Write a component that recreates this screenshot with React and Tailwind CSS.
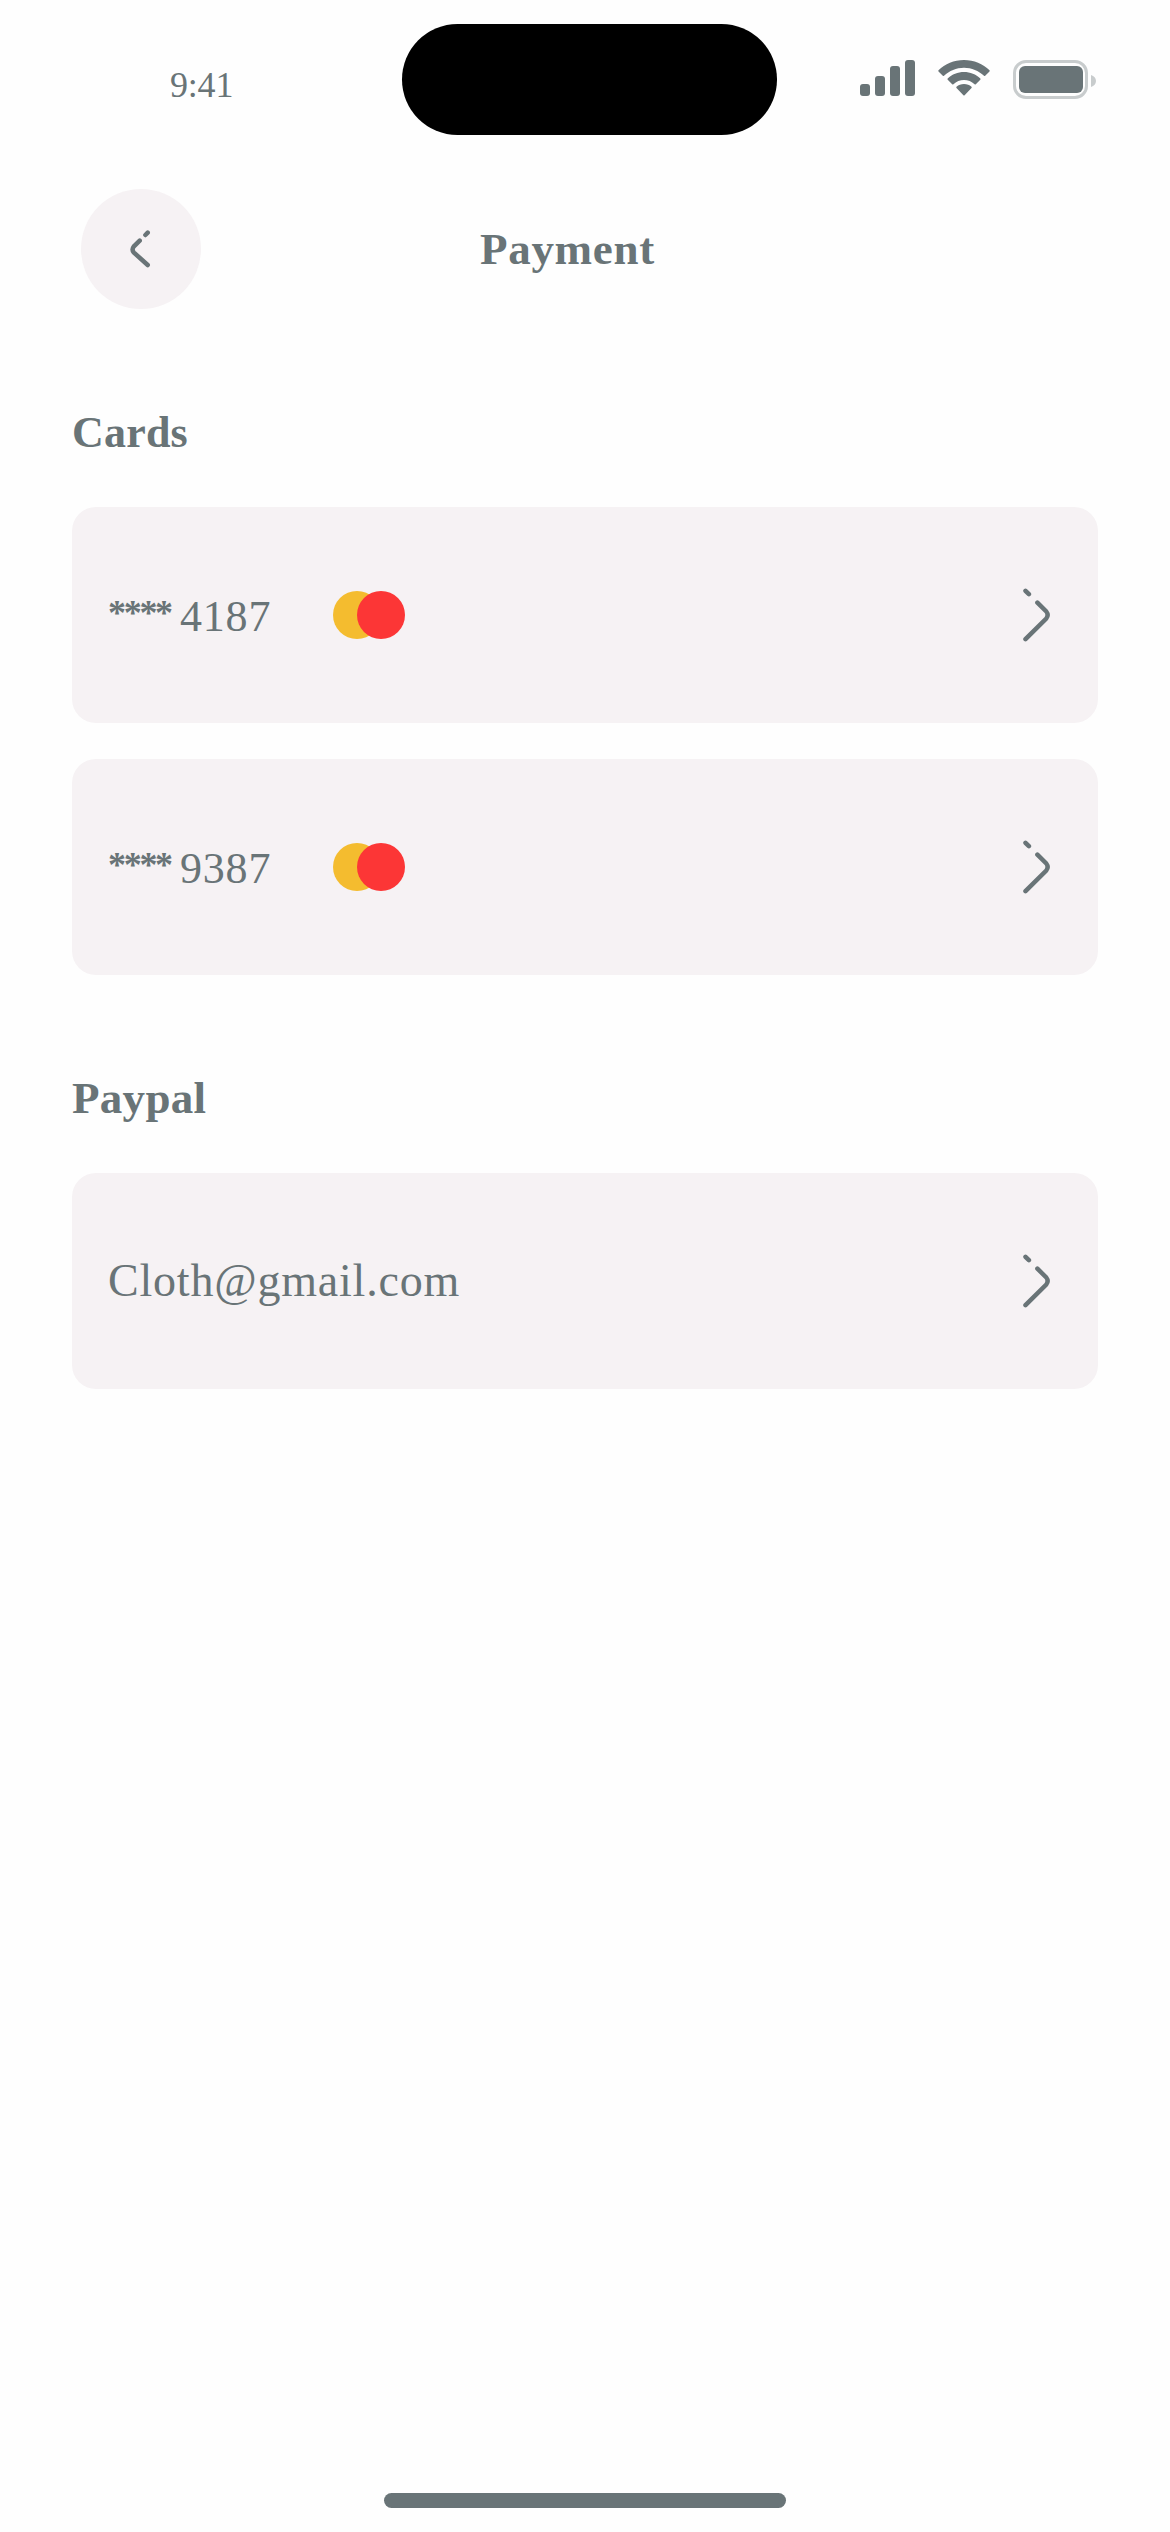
function StatusBar() {
  return (
    <header className="flex h-[159px] items-start">
      <div className="w-[402px] pl-[170px] pt-[65px] text-[36px] leading-[40px] tracking-[-0.2px]">9:41</div>
      <div className="mt-6 h-[111px] w-[375px] rounded-full bg-black" />
      <svg className="ml-[83px] mt-[60px] h-9 w-[55px]" viewBox="0 0 55 36" fill="currentColor">
        <rect x="0" y="24" width="10" height="12" rx="3" />
        <rect x="15" y="16" width="10" height="20" rx="3" />
        <rect x="30" y="6" width="10" height="30" rx="3" />
        <rect x="45" y="0" width="10" height="36" rx="3" />
      </svg>
      <svg className="ml-[23px] mt-[60px] h-9 w-[52px]" viewBox="0 0 52 36" fill="currentColor">
        <path d="M26 0C36 0 45 3.8 51.5 10.2Q52 10.8 51.5 11.4L47.2 15.8Q46.6 16.3 46 15.8C40.6 10.8 33.7 7.8 26 7.8S11.4 10.8 6 15.8Q5.4 16.3 4.8 15.8L.5 11.4Q0 10.8 .5 10.2C7 3.8 16 0 26 0Z" />
        <path d="M26 12C32.2 12 38 14.3 42.3 18.5Q42.9 19.1 42.3 19.7L37.8 24.2Q37.2 24.7 36.6 24.2C33.7 21.5 30 20 26 20S18.3 21.5 15.4 24.2Q14.8 24.7 14.2 24.2L9.7 19.7Q9.1 19.1 9.7 18.5C14 14.3 19.8 12 26 12Z" />
        <path d="M26 24C29 24 31.5 25 33.5 26.7Q34.1 27.3 33.5 27.9L26.6 35.3Q26 35.9 25.4 35.3L18.5 27.9Q17.9 27.3 18.5 26.7C20.5 25 23 24 26 24Z" />
      </svg>
      <svg className="ml-[23px] mt-[60px] h-[39px] w-[83px]" viewBox="0 0 83 39" fill="currentColor">
        <rect x="1.5" y="1.5" width="72" height="36" rx="11.5" fill="none" stroke="#c8cccd" strokeWidth="3" />
        <rect x="6" y="6" width="64" height="27" rx="6" />
        <path d="M78 15C81 16 83 18 83 21S81 26 78 27Z" fill="#c8cccd" />
      </svg>
    </header>
  );
}

function BackIcon() {
  return (
    <svg className="h-10 w-6" viewBox="0 0 24 40" fill="none" stroke="currentColor" strokeWidth="4.5" strokeLinecap="round">
      <path d="M18.7 3.7L16.4 6M10.7 11.7L4.7 17.6Q2.5 20.5 4.7 23.4L18.7 36" />
    </svg>
  );
}

function ChevronIcon() {
  return (
    <svg className="h-[54px] w-[28px]" viewBox="0 0 28 54" fill="none" stroke="currentColor" strokeWidth="4.5" strokeLinecap="round">
      <path d="M3.5 2.8L6.9 6.2M15.4 14.7L24.3 23.5Q27 27 24.3 30.5L3.5 51.2" />
    </svg>
  );
}

function Row({ children }) {
  return (
    <button className="flex h-[216px] w-full items-center justify-between rounded-3xl bg-[#f6f2f4] pl-9 pr-12 text-left">
      {children}
      <ChevronIcon />
    </button>
  );
}

function CardRow({ digits }) {
  return (
    <Row>
      <div className="flex items-center">
        <div className="flex w-[225px] pt-1 text-[44px] leading-[48px]">
          <span className="-mt-1 w-[72px] text-[36px] font-bold tracking-[-2.3px]">****</span>
          <span className="tracking-[0.8px]">{digits}</span>
        </div>
        <div className="flex">
          <span className="size-12 rounded-full bg-[#f4bc2f]" />
          <span className="-ml-6 size-12 rounded-full bg-[#fc3636]" />
        </div>
      </div>
    </Row>
  );
}

export default function App() {
  return (
    <div className={'flex h-[2532px] w-[1170px] flex-col bg-[#fefefe] text-[#697477] font-["Liberation_Serif",serif]'}>
      <StatusBar />
      <nav className="mt-[30px] flex h-[120px] items-center pl-[81px]">
        <button className="flex size-[120px] items-center justify-center rounded-full bg-[#f6f2f4]">
          <BackIcon />
        </button>
        <h1 className="ml-[279px] text-[45px] font-bold leading-[48px] tracking-[0.7px]">Payment</h1>
      </nav>
      <main className="flex flex-1 flex-col px-[72px]">
        <h2 className="mt-[99px] h-[99px] pt-px text-[44px] font-bold leading-[48px] tracking-[0.2px]">Cards</h2>
        <div className="flex flex-col gap-9">
          <CardRow digits="4187" />
          <CardRow digits="9387" />
        </div>
        <h2 className="mt-[99px] h-[99px] text-[45px] font-bold leading-[48px] tracking-[0.3px]">Paypal</h2>
        <Row>
          <span className="text-[46px] leading-[48px] tracking-[0.8px]">Cloth@gmail.com</span>
        </Row>
      </main>
      <div className="mb-6 h-[15px] w-[402px] self-center rounded-full bg-[#697477]" />
    </div>
  );
}
